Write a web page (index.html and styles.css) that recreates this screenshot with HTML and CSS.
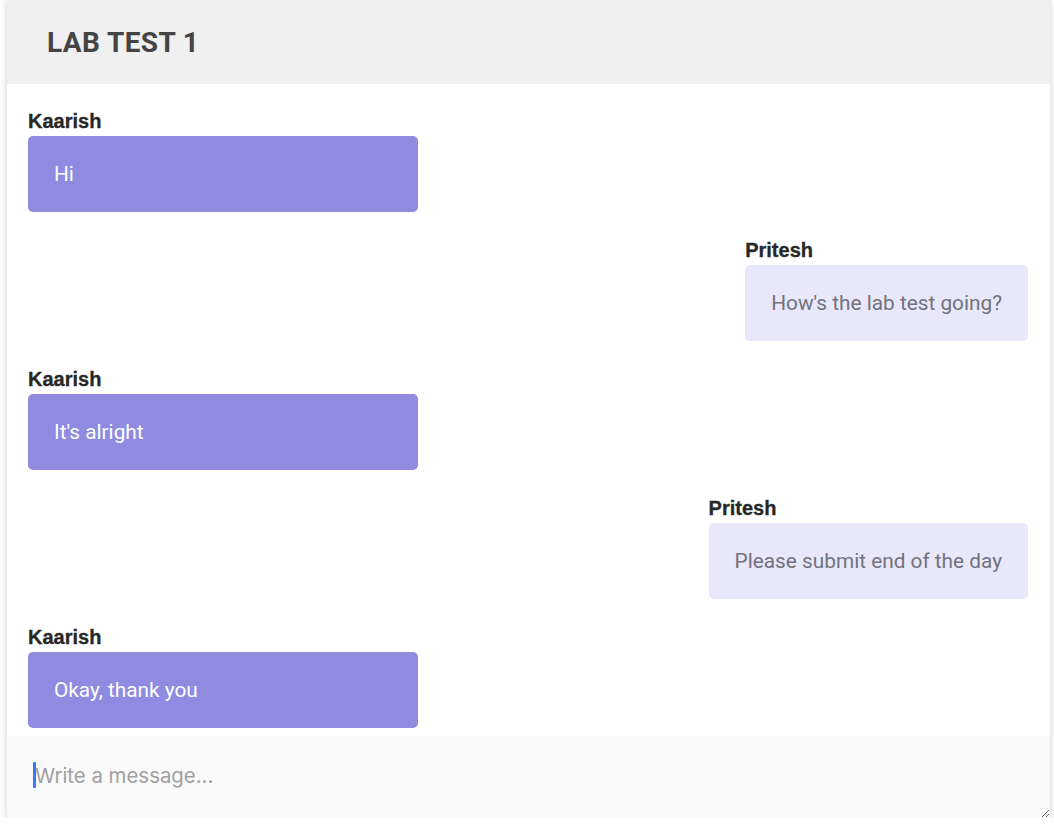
FILE: index.html
```html
<!DOCTYPE html>
<html lang="en">
<head>
<meta charset="utf-8">
<title>Lab Test 1</title>
<link rel="stylesheet" href="styles.css">
</head>
<body>
<div class="chat">
  <header class="chat-header">
    <h1 class="chat-title">LAB TEST 1</h1>
  </header>
  <main class="messages">
    <div class="msg msg-left">
      <div class="msg-name">Kaarish</div>
      <div class="bubble bubble-own">Hi</div>
    </div>
    <div class="msg msg-right">
      <div class="msg-name">Pritesh</div>
      <div class="bubble bubble-other">How's the lab test going?</div>
    </div>
    <div class="msg msg-left">
      <div class="msg-name">Kaarish</div>
      <div class="bubble bubble-own">It's alright</div>
    </div>
    <div class="msg msg-right">
      <div class="msg-name">Pritesh</div>
      <div class="bubble bubble-other">Please submit end of the day</div>
    </div>
    <div class="msg msg-left">
      <div class="msg-name">Kaarish</div>
      <div class="bubble bubble-own">Okay, thank you</div>
    </div>
  </main>
  <div class="composer">
    <textarea class="composer-input" placeholder="Write a message..."></textarea>
    <span class="caret"></span>
  </div>
</div>
</body>
</html>
```

FILE: styles.css
```css
* { box-sizing: border-box; }

html, body {
  margin: 0;
  padding: 0;
  background: #ffffff;
}

.chat {
  margin-left: 7px;
  width: 1043px;
  height: 818px;
  display: flex;
  flex-direction: column;
  background: #ffffff;
  box-shadow: 0 1px 7px rgba(0, 0, 0, 0.2);
}

.chat-header {
  height: 84px;
  flex: none;
  background: #f0f0f0;
  display: flex;
  align-items: center;
  padding-left: 40px;
}

.chat-title {
  margin: 0;
  font-family: Roboto, "Liberation Sans", sans-serif;
  font-weight: 700;
  font-size: 28px;
  color: #444444;
  letter-spacing: 0.4px;
}

.messages {
  flex: 1;
  overflow: hidden;
  padding: 26px 22px 0 21px;
  display: flex;
  flex-direction: column;
  gap: 27px;
}

.msg {
  display: flex;
  flex-direction: column;
  align-self: flex-start;
}

.msg-right {
  align-self: flex-end;
}

.msg-name {
  font-family: "Liberation Sans", Arial, sans-serif;
  font-weight: 700;
  font-size: 20px;
  line-height: 23px;
  color: #272727;
  margin-bottom: 3px;
  -webkit-text-stroke: 0.3px #272727;
}

.bubble {
  font-family: Roboto, "Liberation Sans", sans-serif;
  font-size: 20.8px;
  line-height: 24px;
  padding: 26px 26px;
  border-radius: 5px;
}

.bubble-own {
  width: 390px;
  background: #8e8be1;
  color: #ffffff;
}

.bubble-other {
  background: #e8e8fa;
  color: #72727f;
}

.composer {
  position: relative;
  height: 82px;
  flex: none;
  background: #fafafa;
}

.composer-input {
  display: block;
  width: 100%;
  height: 82px;
  margin: 0;
  border: none;
  outline: none;
  background: #fafafa;
  padding: 28px 26px 0 28px;
  font-family: Inter, "Noto Sans", sans-serif;
  font-size: 20.4px;
  line-height: 24px;
  color: #333333;
}

.composer-input::placeholder {
  color: #a0a0a0;
}

.caret {
  position: absolute;
  left: 26px;
  top: 26px;
  width: 3px;
  height: 26px;
  border-radius: 1px;
  background: #3478f6;
}
```
